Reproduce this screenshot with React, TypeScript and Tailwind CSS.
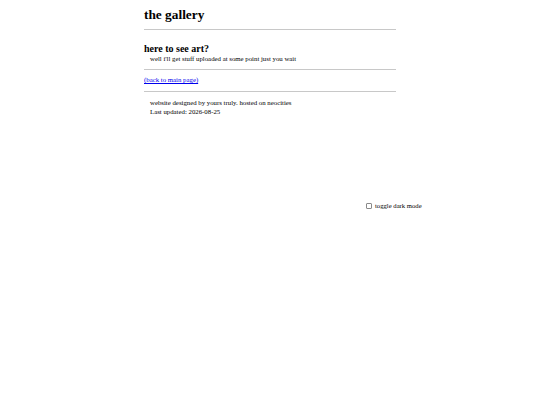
import React from "react";

export default function App() {
  return (
    <div className="relative w-[540px] h-[405px] bg-white text-black" style={{ fontFamily: '"Liberation Serif", "Times New Roman", serif' }}>
      <div className="mx-auto w-[252px] pt-[7px]">
        <h1 className="text-[13.33px] leading-[16px] font-bold">the gallery</h1>
        <div className="mt-[6px] h-px bg-[#c8c8c8]" />
        <h2 className="mt-[13px] text-[10px] leading-[12px] font-bold">here to see art?</h2>
        <p className="pl-[6px] text-[6.8px] leading-[8px]">well i'll get stuff uploaded at some point just you wait</p>
        <div className="mt-[6px] h-px bg-[#c8c8c8]" />
        <p className="mt-[6px] text-[6.8px] leading-[8px]">
          <a href="#" className="text-[#0000ee] underline">(back to main page)</a>
        </p>
        <div className="mt-[7px] h-px bg-[#c8c8c8]" />
        <div className="mt-[6px] pl-[6px] text-[6.8px] leading-[9px]">
          <p>website designed by yours truly. hosted on neocities</p>
          <p>Last updated: 2026-08-25</p>
        </div>
      </div>
      <label className="absolute left-[366px] top-[202px] flex items-center gap-[3px] text-[6.67px] leading-[8px]">
        <span className="block w-[6px] h-[6px] border border-[#8a8a8a] rounded-[1px] bg-white" />
        <span>toggle dark mode</span>
      </label>
    </div>
  );
}
